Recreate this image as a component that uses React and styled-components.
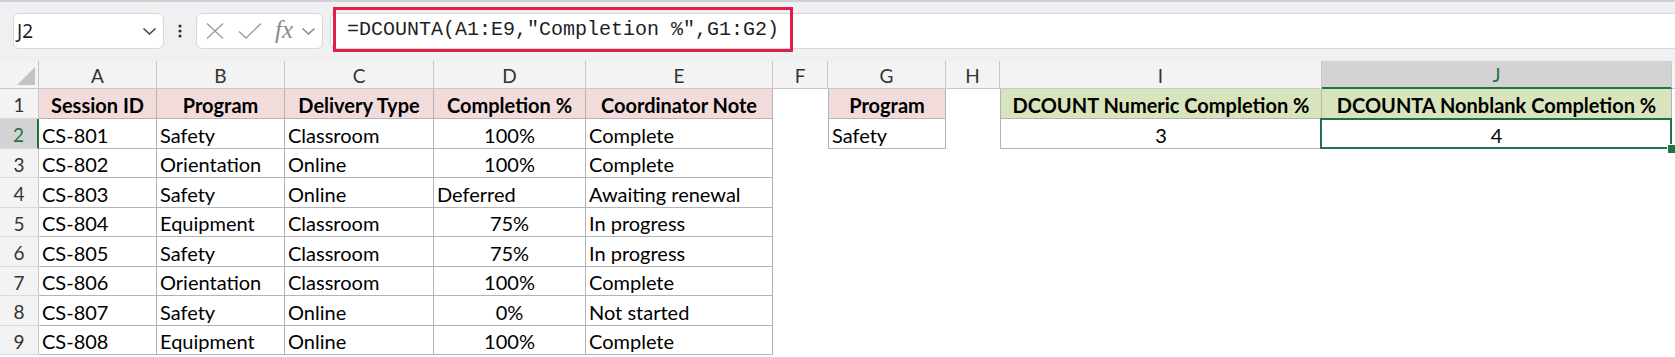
import React from "react";
import styled, { createGlobalStyle } from "styled-components";

const GlobalStyle = createGlobalStyle`
  html, body {
    margin: 0;
    padding: 0;
    background: #ffffff;
  }
  body {
    font-family: "Lato", "Liberation Sans", sans-serif;
    overflow: hidden;
  }
`;

const GREEN = "#217346";

const Page = styled.div`
  width: 1675px;
  height: 357px;
  overflow: hidden;
`;

const Toolbar = styled.div`
  height: 61px;
  box-sizing: border-box;
  border-top: 2px solid #cdd0d4;
  padding-top: 11px;
  background: #eef0f2;
  display: flex;
  align-items: flex-start;
`;

const NameBox = styled.div`
  margin-left: 13px;
  width: 151px;
  height: 36px;
  box-sizing: border-box;
  border: 1px solid #d6d8db;
  border-radius: 6px;
  background: #ffffff;
  display: flex;
  align-items: center;
  justify-content: space-between;
  padding: 0 6px 0 3px;
  font-family: "Noto Sans", "Open Sans", sans-serif;
  font-size: 19px;
  color: #1f1f1f;
`;

const Dots = styled.div`
  width: 32px;
  height: 36px;
  display: flex;
  align-items: center;
  justify-content: center;
`;

const FxGroup = styled.div`
  width: 127px;
  height: 36px;
  box-sizing: border-box;
  border: 1px solid #d6d8db;
  border-radius: 6px;
  background: #ffffff;
  display: flex;
  align-items: center;
  padding-left: 9px;
  gap: 14px;
`;

const Fx = styled.span`
  font-family: "Liberation Serif", "DejaVu Serif", serif;
  font-style: italic;
  font-size: 25px;
  color: #8a8a8a;
  margin-left: -1px;
  margin-right: -12px;
  margin-top: -3px;
`;

const FormulaInput = styled.div`
  flex: 1;
  margin-left: 7px;
  height: 36px;
  box-sizing: border-box;
  border: 1px solid #d6d8db;
  border-right: none;
  border-radius: 6px 0 0 6px;
  background: #ffffff;
  display: flex;
  align-items: center;
`;

const Highlight = styled.div`
  margin-left: 2px;
  margin-bottom: 3px;
  width: 460px;
  height: 45px;
  box-sizing: border-box;
  border: 3px solid #e11d48;
  display: flex;
  align-items: center;
  padding-left: 11px;
  font-family: "Liberation Mono", "DejaVu Sans Mono", monospace;
  font-size: 20px;
  color: #1f1f1f;
  white-space: pre;
`;

const Sheet = styled.div`
  display: grid;
  grid-template-columns: 39px 118px 128px 149px 152px 187px 55px 118px 54px 322px 350px 1fr;
  grid-template-rows: 28px 30px 30px 29px 30px 29px 30px 29px 30px 29px;
  font-size: 20px;
  color: #000000;
`;

const Corner = styled.div`
  background: #f3f3f3;
  border-right: 1px solid #c8c8c8;
  border-bottom: 1px solid #c8c8c8;
  box-sizing: border-box;
  position: relative;
  &::after {
    content: "";
    position: absolute;
    right: 3px;
    bottom: 3px;
    width: 0;
    height: 0;
    border-left: 18px solid transparent;
    border-bottom: 18px solid #c2c2c2;
  }
`;

const ColHead = styled.div`
  box-sizing: border-box;
  background: ${(p) => (p.$active ? "#d3d3d3" : "#f3f3f3")};
  color: ${(p) => (p.$active ? GREEN : "#333333")};
  border-right: 1px solid #c8c8c8;
  border-bottom: ${(p) => (p.$active ? `2px solid ${GREEN}` : "1px solid #c8c8c8")};
  display: flex;
  align-items: center;
  justify-content: center;
  padding-top: 1px;
  font-size: 19px;
`;

const RowHead = styled.div`
  box-sizing: border-box;
  background: ${(p) => (p.$active ? "#d3d3d3" : "#f3f3f3")};
  color: ${(p) => (p.$active ? GREEN : "#333333")};
  border-right: ${(p) => (p.$active ? `2px solid ${GREEN}` : "1px solid #c8c8c8")};
  border-bottom: 1px solid #dadada;
  display: flex;
  align-items: center;
  justify-content: center;
  padding-top: 2px;
  font-size: 19px;
`;

const fills = {
  pink: "#f2dcdb",
  green: "#d8e4bc",
};

const Cell = styled.div`
  position: relative;
  box-sizing: border-box;
  background: ${(p) => (p.$fill ? fills[p.$fill] : "#ffffff")};
  border-right: ${(p) => (p.$boxed ? "1px solid #b4b4b4" : "none")};
  border-bottom: ${(p) => (p.$boxed ? "1px solid #b4b4b4" : "none")};
  border-left: ${(p) => (p.$left ? "1px solid #b4b4b4" : "none")};
  display: flex;
  align-items: center;
  justify-content: ${(p) => (p.$center ? "center" : "flex-start")};
  padding: 2px 3px 0;
  font-weight: ${(p) => (p.$bold ? 700 : 400)};
  white-space: nowrap;
  overflow: visible;
`;

const Selection = styled.div`
  position: absolute;
  z-index: 2;
  inset: -1px -1px -1px -2px;
  border: 2px solid ${GREEN};
  pointer-events: none;
`;

const FillHandle = styled.div`
  position: absolute;
  right: -5px;
  bottom: -6px;
  width: 7px;
  height: 8px;
  background: ${GREEN};
  border: 1px solid #ffffff;
  border-right: none;
  border-bottom: none;
`;

const columns = ["A", "B", "C", "D", "E", "F", "G", "H", "I", "J"];

const data = [
  ["CS-801", "Safety", "Classroom", "100%", "Complete"],
  ["CS-802", "Orientation", "Online", "100%", "Complete"],
  ["CS-803", "Safety", "Online", "Deferred", "Awaiting renewal"],
  ["CS-804", "Equipment", "Classroom", "75%", "In progress"],
  ["CS-805", "Safety", "Classroom", "75%", "In progress"],
  ["CS-806", "Orientation", "Classroom", "100%", "Complete"],
  ["CS-807", "Safety", "Online", "0%", "Not started"],
  ["CS-808", "Equipment", "Online", "100%", "Complete"],
];

const headers = ["Session ID", "Program", "Delivery Type", "Completion %", "Coordinator Note"];

const isPercent = (v) => /%$/.test(v);

const Chevron = ({ color = "#444", x = 0 }) => (
  <svg width="15" height="9" viewBox="0 0 15 9" style={{ marginLeft: x }}>
    <path d="M1.5 1.5 L7.5 7 L13.5 1.5" fill="none" stroke={color} strokeWidth="1.6" />
  </svg>
);

const Blank = () => <Cell />;

const App = () => {
  return (
    <Page>
      <GlobalStyle />
      <Toolbar>
        <NameBox>
          <span>J2</span>
          <Chevron />
        </NameBox>
        <Dots>
          <svg width="4" height="14" viewBox="0 0 4 14">
            <circle cx="2" cy="2" r="1.6" fill="#333" />
            <circle cx="2" cy="7" r="1.6" fill="#333" />
            <circle cx="2" cy="12" r="1.6" fill="#333" />
          </svg>
        </Dots>
        <FxGroup>
          <svg width="18" height="16" viewBox="0 0 18 16">
            <path d="M1 0.5 L17 15.5 M17 0.5 L1 15.5" stroke="#9a9a9a" strokeWidth="1.3" />
          </svg>
          <svg width="24" height="16" viewBox="0 0 24 16">
            <path d="M1 8.5 L8 15 L23 0.5" fill="none" stroke="#9a9a9a" strokeWidth="1.3" />
          </svg>
          <Fx>fx</Fx>
          <Chevron color="#8a8a8a" x={6} />
        </FxGroup>
        <FormulaInput>
          <Highlight>=DCOUNTA(A1:E9,"Completion %",G1:G2)</Highlight>
        </FormulaInput>
      </Toolbar>

      <Sheet>
        <Corner />
        {columns.map((c) => (
          <ColHead key={c} $active={c === "J"}>
            {c}
          </ColHead>
        ))}
        <ColHead />

        <RowHead>1</RowHead>
        {headers.map((h) => (
          <Cell key={h} $boxed $fill="pink" $bold $center>
            {h}
          </Cell>
        ))}
        <Blank />
        <Cell $boxed $left $fill="pink" $bold $center>
          Program
        </Cell>
        <Blank />
        <Cell $boxed $left $fill="green" $bold $center>
          DCOUNT Numeric Completion %
        </Cell>
        <Cell $boxed $fill="green" $bold $center>
          DCOUNTA Nonblank Completion %
        </Cell>
        <Blank />

        {data.map((row, i) => (
          <React.Fragment key={row[0]}>
            <RowHead $active={i === 0}>{i + 2}</RowHead>
            {row.map((v, j) => (
              <Cell key={j} $boxed $center={isPercent(v)}>
                {v}
              </Cell>
            ))}
            <Blank />
            {i === 0 ? (
              <>
                <Cell $boxed $left>
                  Safety
                </Cell>
                <Blank />
                <Cell $boxed $left $center>
                  3
                </Cell>
                <Cell $boxed $center>
                  4
                  <Selection>
                    <FillHandle />
                  </Selection>
                </Cell>
              </>
            ) : (
              <>
                <Blank />
                <Blank />
                <Blank />
                <Blank />
              </>
            )}
            <Blank />
          </React.Fragment>
        ))}
      </Sheet>
    </Page>
  );
};

export default App;
